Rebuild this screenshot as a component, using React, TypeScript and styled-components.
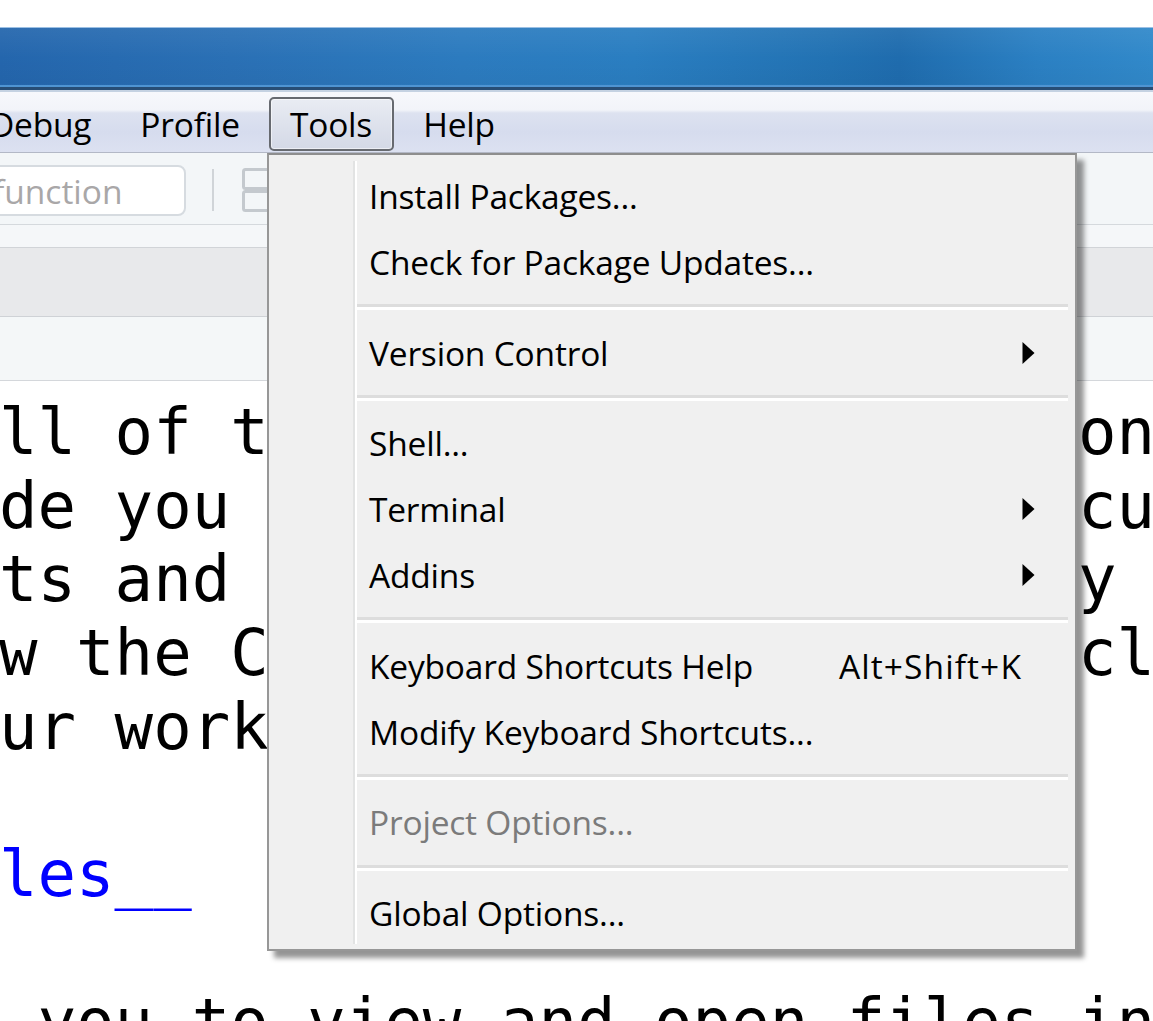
import React from "react";
import styled, { createGlobalStyle, css } from "styled-components";

const Global = createGlobalStyle`
  html, body { margin: 0; padding: 0; background: #ffffff; overflow: hidden; }
  #root { width: 1153px; height: 1021px; }
`;

const uiFont = `"Open Sans", "Noto Sans", "DejaVu Sans", sans-serif`;

const Screen = styled.div`
  position: relative;
  width: 1153px;
  height: 1021px;
  overflow: hidden;
  background: #ffffff;
  display: flex;
  flex-direction: column;
  font-family: ${uiFont};
`;

const TopGap = styled.div`
  flex: none;
  height: 27px;
  background: #ffffff;
`;

const TitleBar = styled.div`
  flex: none;
  height: 64px;
  border-top: 1px solid #9cc0e4;
  background:
    linear-gradient(
      to bottom,
      rgba(255, 255, 255, 0.06) 0,
      rgba(255, 255, 255, 0) 30px,
      rgba(0, 0, 0, 0.03) 56px,
      transparent 57px,
      #4f94d2 57px,
      #4f94d2 59px,
      #274d75 59px,
      #274d75 62px,
      #c5d2e2 62px,
      #c5d2e2 64px
    ),
    linear-gradient(
      to right,
      #2466ad 0%,
      #2a70b5 20%,
      #2c7bbf 40%,
      #2a7ec1 55%,
      #2272b3 72%,
      #1f6cae 78%,
      #2b80c3 90%,
      #3189ca 100%
    );
  background-repeat: no-repeat;
  background-size: 100% 64px, 100% 57px;
`;

const MenuBar = styled.div`
  flex: none;
  box-sizing: border-box;
  height: 61px;
  border-bottom: 1px solid #b3b8c6;
  display: flex;
  align-items: flex-start;
  padding-top: 5px;
  background: linear-gradient(
    to bottom,
    #f7f8fc 0,
    #f2f4f9 18px,
    #dde2f0 21px,
    #d6dcee 40px,
    #dce1f1 60px
  );
`;

const MenuBarItems = styled.div`
  display: flex;
  gap: 9px;
  margin-left: -30px;
`;

const TopItem = styled.div<{ $active?: boolean }>`
  box-sizing: border-box;
  height: 54px;
  padding: 0 19px;
  border: 1px solid transparent;
  border-radius: 5px;
  display: flex;
  align-items: center;
  font-size: 33.5px;
  color: #000;
  letter-spacing: -0.2px;
  ${(p) =>
    p.$active &&
    css`
      border: 2px solid #676a70;
      padding: 0 20px 0 19px;
      background: linear-gradient(to bottom, #e9ecf3 0%, #dfe3ed 45%, #d4d9e6 100%);
      box-shadow: inset 0 0 0 1px rgba(255, 255, 255, 0.55);
    `}
`;

const Toolbar = styled.div`
  flex: none;
  box-sizing: border-box;
  height: 72px;
  border-bottom: 1px solid #d5d9dd;
  background: #f3f6f8;
  display: flex;
  align-items: flex-start;
  padding-top: 12px;
`;

const SearchBox = styled.div`
  box-sizing: border-box;
  margin-left: -20px;
  width: 206px;
  height: 51px;
  border: 2px solid #d6dbe0;
  border-radius: 8px;
  background: #ffffff;
  display: flex;
  align-items: center;
  padding-left: 11px;
  font-size: 33.5px;
  color: #a9a7a8;
`;

const ToolDivider = styled.div`
  width: 2px;
  height: 42px;
  margin: 4px 0 0 26px;
  background: #d0d4d8;
`;

const PaneIcon = styled.svg`
  margin: 3px 0 0 28px;
  flex: none;
`;

const SubBar = styled.div`
  flex: none;
  height: 22px;
  background: #f5f7f9;
  border-bottom: 1px solid #d1d4d8;
`;

const TabStrip = styled.div`
  flex: none;
  height: 68px;
  background: #e8e9eb;
  border-bottom: 1px solid #cfd2d6;
`;

const InfoBand = styled.div`
  flex: none;
  height: 63px;
  background: #f4f7f8;
  border-bottom: 1px solid #d4d7db;
`;

const Code = styled.div`
  flex: 1;
  background: #ffffff;
  padding-top: 15px;
  margin-left: -1px;
  font-family: "DejaVu Sans Mono", "Liberation Mono", monospace;
  font-size: 64px;
  line-height: 73.7px;
  white-space: pre;
  color: #000000;
`;

const CodeLine = styled.div<{ $blue?: boolean }>`
  height: 73.7px;
  color: ${(p) => (p.$blue ? "#0000ff" : "#000000")};
`;

/* ---------- dropdown menu (overlay) ---------- */

const Dropdown = styled.div`
  position: absolute;
  left: 267px;
  top: 153px;
  width: 810px;
  height: 798px;
  box-sizing: border-box;
  border: 2px solid #979797;
  border-top-color: #8e8e8e;
  background: #f0f0f0;
  padding: 8px 3px 3px 3px;
  display: flex;
  box-shadow: 7px 7px 5px rgba(0, 0, 0, 0.42);
  font-family: ${uiFont};
`;

const Gutter = styled.div`
  flex: none;
  width: 81px;
  margin: -2px 0 2px 0;
  border-right: 2px solid #e2e3e3;
  box-shadow: 2px 0 0 #ffffff;
`;

const ItemList = styled.div`
  flex: 1;
  display: flex;
  flex-direction: column;
  margin-left: 2px;
`;

const Item = styled.div<{ $disabled?: boolean }>`
  height: 66px;
  display: flex;
  align-items: center;
  padding: 0 37px 0 12px;
  font-size: 33.5px;
  letter-spacing: -0.2px;
  color: ${(p) => (p.$disabled ? "#7b7b7b" : "#000000")};
`;

const Label = styled.span`
  flex: 1;
  white-space: nowrap;
`;

const Shortcut = styled.span`
  white-space: nowrap;
  letter-spacing: 1.1px;
`;

const ArrowCell = styled.span`
  flex: none;
  width: 13px;
  display: flex;
  align-items: center;
  justify-content: flex-end;
`;

const Separator = styled.div`
  height: 25px;
  display: flex;
  flex-direction: column;
  justify-content: center;
  margin-right: 4px;
  &::before {
    content: "";
    display: block;
    height: 3px;
    background: #dddddd;
  }
  &::after {
    content: "";
    display: block;
    height: 3px;
    background: #ffffff;
  }
`;

type Entry =
  | { kind: "item"; label: string; shortcut?: string; sub?: boolean; disabled?: boolean }
  | { kind: "sep" };

const entries: Entry[] = [
  { kind: "item", label: "Install Packages..." },
  { kind: "item", label: "Check for Package Updates..." },
  { kind: "sep" },
  { kind: "item", label: "Version Control", sub: true },
  { kind: "sep" },
  { kind: "item", label: "Shell..." },
  { kind: "item", label: "Terminal", sub: true },
  { kind: "item", label: "Addins", sub: true },
  { kind: "sep" },
  { kind: "item", label: "Keyboard Shortcuts Help", shortcut: "Alt+Shift+K" },
  { kind: "item", label: "Modify Keyboard Shortcuts..." },
  { kind: "sep" },
  { kind: "item", label: "Project Options...", disabled: true },
  { kind: "sep" },
  { kind: "item", label: "Global Options..." },
];

const SubArrow = () => (
  <svg width="13" height="22" viewBox="0 0 13 22">
    <polygon points="0.5,0 12.5,11 0.5,22" fill="#000000" />
  </svg>
);

const codeLines: { text: string; blue?: boolean }[] = [
  { text: "ll of the IDE tools and options" },
  { text: "de you through the IDE, and customize" },
  { text: "ts and keys that make it easy to" },
  { text: "w the Console pane. You can click" },
  { text: "ur workspace." },
  { text: "" },
  { text: "les__", blue: true },
  { text: "" },
  { text: " you to view and open files in" },
];

export default function App() {
  return (
    <Screen>
      <Global />
      <TopGap />
      <TitleBar />
      <MenuBar>
        <MenuBarItems>
          <TopItem>Debug</TopItem>
          <TopItem>Profile</TopItem>
          <TopItem $active>Tools</TopItem>
          <TopItem>Help</TopItem>
        </MenuBarItems>
      </MenuBar>
      <Toolbar>
        <SearchBox>function</SearchBox>
        <ToolDivider />
        <PaneIcon width="34" height="44" viewBox="0 0 34 44">
          <rect x="1.5" y="1.5" width="31" height="19" fill="none" stroke="#c4c9ce" strokeWidth="3" rx="2" />
          <rect x="1.5" y="23.5" width="31" height="19" fill="none" stroke="#c4c9ce" strokeWidth="3" rx="2" />
        </PaneIcon>
      </Toolbar>
      <SubBar />
      <TabStrip />
      <InfoBand />
      <Code>
        {codeLines.map((l, i) => (
          <CodeLine key={i} $blue={l.blue}>
            {l.text}
          </CodeLine>
        ))}
      </Code>

      <Dropdown>
        <Gutter />
        <ItemList>
          {entries.map((e, i) =>
            e.kind === "sep" ? (
              <Separator key={i} />
            ) : (
              <Item key={i} $disabled={e.disabled}>
                <Label>{e.label}</Label>
                {e.shortcut && <Shortcut>{e.shortcut}</Shortcut>}
                <ArrowCell>{e.sub && <SubArrow />}</ArrowCell>
              </Item>
            )
          )}
        </ItemList>
      </Dropdown>
    </Screen>
  );
}
